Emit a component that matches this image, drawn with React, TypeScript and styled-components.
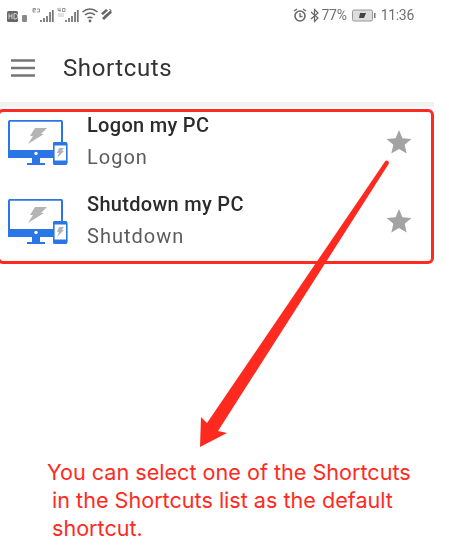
import React from "react";
import styled, { createGlobalStyle } from "styled-components";

const Global = createGlobalStyle`
  html, body { margin: 0; padding: 0; background: #fff; }
  body { font-family: Roboto, "Liberation Sans", sans-serif; }
`;

const Page = styled.div`
  position: relative;
  width: 449px;
  height: 556px;
  overflow: hidden;
  background: #fff;
`;

const StatusBar = styled.div`
  display: flex;
  align-items: center;
  justify-content: space-between;
  height: 30px;
  padding: 0 35px 0 7px;
  color: #666;
`;

const StatusGroup = styled.div<{ $gap: number }>`
  display: flex;
  align-items: center;
  gap: ${(p) => p.$gap}px;
  filter: blur(0.4px);
`;

const StatusText = styled.span`
  font-size: 14px;
  line-height: 18px;
  letter-spacing: -0.3px;
  color: #707070;
`;

const AppBar = styled.header`
  display: flex;
  align-items: center;
  gap: 28px;
  height: 77px;
  padding: 4px 0 0 11px;
  box-sizing: border-box;
  border-bottom: 5px solid #f2f2f2;
  width: 434px;
`;

const Title = styled.h1`
  margin: 0;
  font-size: 24px;
  font-weight: 400;
  letter-spacing: 0.6px;
  color: #333;
  filter: blur(0.3px);
`;

const SelectionBox = styled.section`
  box-sizing: border-box;
  width: 437px;
  height: 155px;
  margin: 2px 0 0 -3px;
  padding-top: 1px;
  border: 3px solid #ff2a22;
  border-radius: 6px;
`;

const Row = styled.div`
  display: grid;
  grid-template-columns: 79px 1fr 26px;
  height: 79px;
  padding: 0 19px 0 8px;
  box-sizing: border-box;
  align-items: start;
`;

const IconCell = styled.div`
  margin-top: 7px;
  line-height: 0;
`;

const StarCell = styled.div`
  margin-top: 16px;
  line-height: 0;
`;

const RowText = styled.div`
  display: flex;
  flex-direction: column;
  gap: 8px;
  filter: blur(0.25px);
`;

const RowTitle = styled.div`
  font-size: 20px;
  line-height: 24px;
  font-weight: 500;
  letter-spacing: 0.3px;
  color: #2b2b2b;
`;

const RowSub = styled.div`
  font-size: 20px;
  line-height: 24px;
  letter-spacing: 1px;
  color: #5c5c5c;
`;

const Note = styled.div`
  margin-top: 194px;
  color: #ff2a22;
  font-family: Inter, sans-serif;
  font-size: 21.6px;
  line-height: 28px;
`;

const NoteLine = styled.div<{ $indent: number }>`
  padding-left: ${(p) => p.$indent}px;
  white-space: nowrap;
`;

const ArrowOverlay = styled.svg`
  position: absolute;
  left: 0;
  top: 0;
  pointer-events: none;
`;

const Hamburger = () => (
  <svg width="24" height="18" viewBox="0 0 24 18">
    <path d="M0 1.500h24M0 9h24M0 16.500h24" stroke="#757575" strokeWidth="2.4" />
  </svg>
);

const DeviceIcon = () => (
  <svg width="60" height="46" viewBox="0 0 60 46">
    <path d="M1 2a1.200 1.200 0 0 1 1.200-1.200h50.600A1.200 1.200 0 0 1 54 2V37H1z" fill="#fff" stroke="#2a76e6" strokeWidth="2" />
    <path d="M0 30h55v8H0z" fill="#2a76e6" />
    <path d="M24 38h8v5h-8zM19 43h18v2H19z" fill="#2a76e6" />
    <circle cx="28" cy="33.500" r="1.700" fill="#fff" />
    <path d="M27 8h12l-6 6h3L20 24l5-8h-3z" fill="#b4b4b4" />
    <rect x="45.800" y="22.800" width="13" height="21.500" rx="1.500" fill="#fff" stroke="#2a76e6" strokeWidth="1.600" />
    <path d="M45 22.500h14v3H45zM45 40.500h14v4H45z" fill="#2a76e6" />
    <path d="M51 28h5l-2 3h2l-7 7 2-5h-2z" fill="#b4b4b4" />
  </svg>
);

const Star = () => (
  <svg width="26" height="26" viewBox="0 0 24 24">
    <path d="M12 1l3.200 7.500 8.300.7-6.300 5.400 1.900 8L12 18.400 4.900 22.600l1.900-8L.5 9.200l8.300-.7z" fill="#a3a3a3" />
  </svg>
);

const rows = [
  { title: "Logon my PC", sub: "Logon" },
  { title: "Shutdown my PC", sub: "Shutdown" },
];

export default function App() {
  return (
    <Page>
      <Global />
      <StatusBar>
        <StatusGroup $gap={4}>
          {/* viewBox origin is page (7, 7) */}
          <svg width="108" height="16" viewBox="0 0 108 16">
            <rect x="0" y="4" width="11" height="11" rx="1.500" fill="#666" />
            <path d="M2 6.500v5.500M5 6.500v5.500M2 9h3M7 6.500v5.500h1a2.700 2.700 0 0 0 0-5.500z" stroke="#ddd" strokeWidth="0.9" fill="none" />
            <rect x="15" y="8" width="5" height="7" rx="1" fill="#8a8a8a" />
            <path d="M26 3V1.500h2.500V3H26V5h2.500M30 2h2.500v3H30" stroke="#888" strokeWidth="0.9" fill="none" />
            <path d="M34 15v-2M37 15v-4M40 15v-6M43 15V5M45.800 15V3M59 15v-2M62 15v-4M65 15v-6M68 15V5M70.800 15V3" stroke="#777" strokeWidth="1.800" />
            <path d="M51 1v2.500h2.500M53 .8V5M55.500 1.500H58v3h-2.500z" stroke="#888" strokeWidth="0.9" fill="none" />
            <path d="M51 7h6M51 9h6" stroke="#bbb" strokeWidth="0.9" />
            <path d="M75.500 5c4.500-4 10.500-4 15 0M78 8c3-2.500 7-2.500 10 0M80.500 11c1.500-1 3.500-1 5 0" stroke="#666" strokeWidth="1.500" fill="none" />
            <circle cx="83" cy="14" r="1.400" fill="#666" />
            <path d="M94 6.500l5-4.500 2 1.500-5 4.500zM97 12l7-6.500.5-2.500-2-1-1 0 2 1.500-6 5z" fill="#666" />
            <path d="M97 13l8-7.500-1.500-1.500L95 11z" fill="#666" />
          </svg>
        </StatusGroup>
        <StatusGroup $gap={3}>
          <svg width="14" height="14" viewBox="0 0 14 14">
            <circle cx="7" cy="8" r="5" fill="none" stroke="#666" strokeWidth="1.600" />
            <path d="M7 5v3.500h2.500M1 3l3-2M13 3l-3-2" stroke="#666" strokeWidth="1.300" fill="none" />
          </svg>
          <svg width="9" height="15" viewBox="0 0 9 15">
            <path d="M1 4l7 6-3.500 3.500v-12L8 5l-7 6" fill="none" stroke="#666" strokeWidth="1.200" />
          </svg>
          <StatusText>77%</StatusText>
          <svg width="24" height="13" viewBox="0 0 24 13" style={{ margin: "0 2px" }}>
            <rect x="0.500" y="1" width="20" height="11" rx="1.500" fill="#ddd" stroke="#999" />
            <path d="M8 4h6l-2 5H7z" fill="#444" />
            <rect x="22" y="4" width="1.500" height="5" fill="#777" />
          </svg>
          <StatusText>11:36</StatusText>
        </StatusGroup>
      </StatusBar>
      <AppBar>
        <Hamburger />
        <Title>Shortcuts</Title>
      </AppBar>
      <SelectionBox>
        {rows.map((r) => (
          <Row key={r.title}>
            <IconCell>
              <DeviceIcon />
            </IconCell>
            <RowText>
              <RowTitle>{r.title}</RowTitle>
              <RowSub>{r.sub}</RowSub>
            </RowText>
            <StarCell>
              <Star />
            </StarCell>
          </Row>
        ))}
      </SelectionBox>
      <Note>
        <NoteLine $indent={47}>You can select one of the Shortcuts</NoteLine>
        <NoteLine $indent={52}>in the Shortcuts list as the default</NoteLine>
        <NoteLine $indent={52}>shortcut.</NoteLine>
      </Note>
      <ArrowOverlay width="449" height="556" viewBox="0 0 449 556">
        <path
          d="M385 161.500a2.200 2.200 0 0 1 3.600 2.500L218 431l9 2-27 14 1-30 6 6z"
          fill="#ff2a1f"
        />
      </ArrowOverlay>
    </Page>
  );
}
